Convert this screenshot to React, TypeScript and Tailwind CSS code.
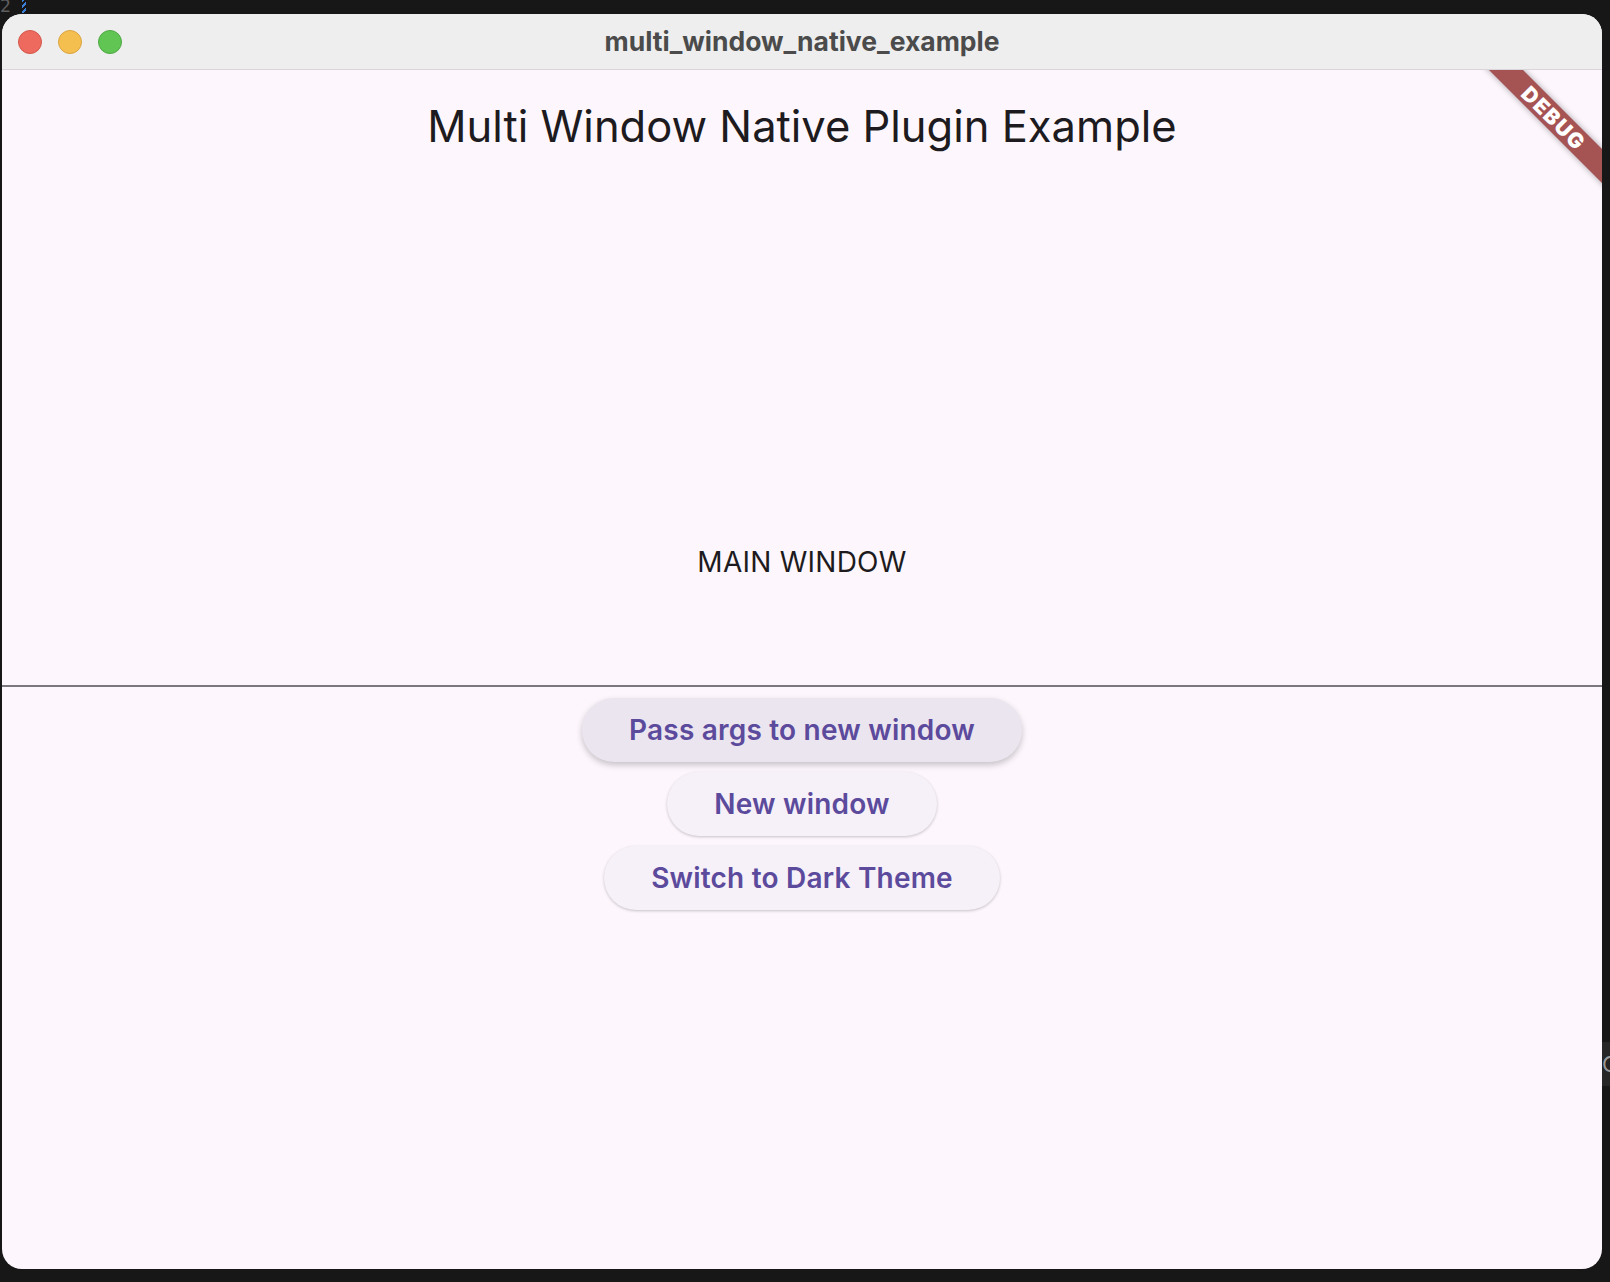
import React from 'react';

// macOS window chrome around a Flutter demo page (rendered at 2x).

const sans = "font-['Inter','Noto_Sans',sans-serif]";

function TrafficLights() {
  return (
    <div className="flex items-center gap-[16px] pl-[16px]">
      <span className="h-[24px] w-[24px] rounded-full border border-[#d2574b] bg-[#ee6a5f]" />
      <span className="h-[24px] w-[24px] rounded-full border border-[#d9a440] bg-[#f5bf4f]" />
      <span className="h-[24px] w-[24px] rounded-full border border-[#4ea842] bg-[#61c554]" />
    </div>
  );
}

function PillButton({ label, active = false }: { label: string; active?: boolean }) {
  const base =
    'h-[64px] rounded-full px-[47px] text-[28px] font-semibold tracking-[0.2px] text-[#5c4a9c]';
  return (
    <button
      type="button"
      className={
        active
          ? `${base} bg-[#ebe5f0] shadow-[0_3px_6px_rgba(0,0,0,0.22)]`
          : `${base} bg-[#f6f1f8] shadow-[0_1px_3px_rgba(0,0,0,0.22)]`
      }
    >
      {label}
    </button>
  );
}

export default function App() {
  return (
    <div className={`relative h-[1282px] w-[1610px] overflow-hidden bg-[#171717] ${sans}`}>
      {/* bits of the editor behind the window */}
      <span className="absolute left-[0px] top-[-8px] font-['DejaVu_Sans_Mono',monospace] text-[18px] text-[#5e5e5e]">
        2
      </span>
      <span className="absolute left-[22px] top-0 h-[13px] w-[4px] bg-[repeating-linear-gradient(135deg,#3b7fd6_0_2px,transparent_2px_4px)]" />
      <div className="absolute right-0 top-[1042px] flex h-[44px] w-[8px] items-center overflow-hidden bg-[#262626]">
        <span className="text-[22px] text-[#9a9a9a]">C</span>
      </div>

      <div className="pl-[2px] pt-[14px]">
        <div className="flex h-[1255px] w-[1600px] flex-col overflow-hidden rounded-[20px] bg-[#fdf7fd]">
          <div className="relative flex h-[56px] shrink-0 items-center border-b border-[#d9d5da] bg-[#eeeeee]">
            <TrafficLights />
            <div className="absolute inset-0 flex items-center justify-center">
              <span className="text-[26.5px] font-bold text-[#4b4b4b]">multi_window_native_example</span>
            </div>
          </div>

          <div className="relative flex flex-1 flex-col items-center overflow-hidden">
            <div className="absolute right-[-52px] top-[36px] flex h-[24px] w-[200px] rotate-45 items-center justify-center bg-[#a65353] shadow-[0_0_6px_rgba(0,0,0,0.35)]">
              <span className="text-[21px] font-black leading-none tracking-[1.5px] text-white">DEBUG</span>
            </div>

            <h1 className="mt-[30px] text-[43.5px] font-normal leading-[52px] text-[#1d1b20]">
              Multi Window Native Plugin Example
            </h1>

            <p className="mt-[393px] text-[28px] leading-[34px] tracking-[0.25px] text-[#1d1b20]">
              MAIN WINDOW
            </p>

            <div className="mt-[106px] h-[2px] w-full bg-[#7b777e]" />

            <div className="mt-[11px] flex flex-col items-center gap-[10px]">
              <PillButton label="Pass args to new window" active />
              <PillButton label="New window" />
              <PillButton label="Switch to Dark Theme" />
            </div>
          </div>
        </div>
      </div>
    </div>
  );
}
